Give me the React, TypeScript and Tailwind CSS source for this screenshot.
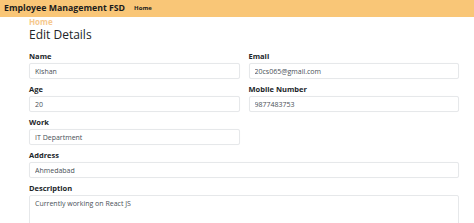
import React from 'react';

const font = { fontFamily: '"Open Sans", "Liberation Sans", Arial, sans-serif' };

function Field({ label, value, wide }: { label: string; value: string; wide?: boolean }) {
  return (
    <div className={wide ? 'col-span-2' : ''}>
      <label className="block text-[7.5px] font-bold text-[#212529] leading-[10px] mb-[2px]">{label}</label>
      <input
        readOnly
        value={value}
        className="block w-full h-[16px] px-[5px] text-[7px] text-[#495057] bg-white border border-[#e6e8ea] rounded-[2px] outline-none shadow-[0_0_1px_rgba(0,0,0,0.04)]"
      />
    </div>
  );
}

export default function App() {
  return (
    <div className="w-[474px] h-[223px] overflow-hidden bg-white" style={font}>
      {/* Navbar */}
      <nav className="h-[17px] bg-[#f9c677] flex items-center pl-[4px] gap-[9px]">
        <span className="text-[8.75px] font-bold text-[#1c1c1c]">Employee Management FSD</span>
        <span className="text-[6px] font-bold text-[#1c1c1c]">Home</span>
      </nav>

      <div className="ml-[29px] w-[430px]">
        <div className="text-[8px] font-bold text-[#f6c98e] leading-[10px]">Home</div>
        <h1 className="text-[12px] text-[#212529] leading-[16px]">Edit Details</h1>

        <div className="grid grid-cols-2 gap-x-[9px] gap-y-[5px] mt-[8px]">
          <Field label="Name" value="Kishan" />
          <Field label="Email" value="20cs065@gmail.com" />
          <Field label="Age" value="20" />
          <Field label="Mobile Number" value="9877483753" />
          <Field label="Work" value="IT Department" />
          <div />
          <Field label="Address" value="Ahmedabad" wide />
          <div className="col-span-2">
            <label className="block text-[7.5px] font-bold text-[#212529] leading-[10px] mb-[2px]">Description</label>
            <textarea
              readOnly
              value="Currently working on React JS"
              className="block w-full h-[40px] px-[5px] py-[3px] text-[7px] text-[#495057] bg-white border border-[#e6e8ea] rounded-[2px] outline-none resize-none"
            />
          </div>
        </div>
      </div>
    </div>
  );
}
